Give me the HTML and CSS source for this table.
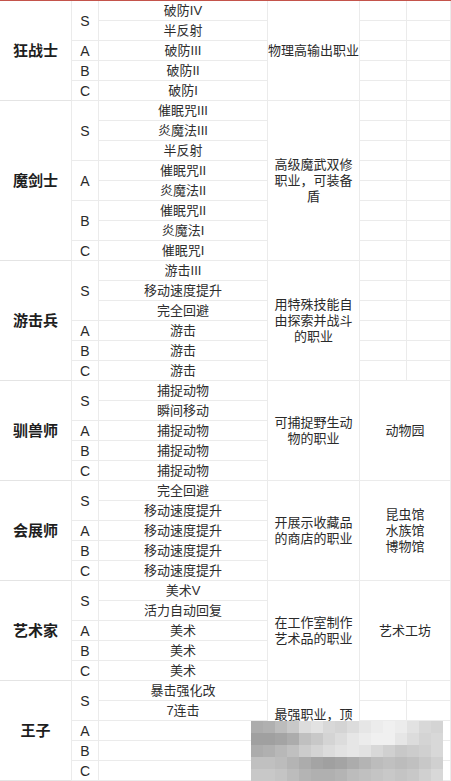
FILE: index.html
```html
<!DOCTYPE html>
<html lang="zh-CN">
<head>
<meta charset="utf-8">
<title>职业表</title>
<link rel="stylesheet" href="styles.css">
</head>
<body>
<div class="page">
  <div class="sheet">
    <!-- 狂战士 -->
    <div class="c job r5">狂战士</div>
    <div class="c rank r2">S</div>
    <div class="c skill">破防IV</div>
    <div class="c desc r5">物理高输出职业</div>
    <div class="c"></div><div class="c"></div>
    <div class="c skill">半反射</div>
    <div class="c"></div><div class="c"></div>
    <div class="c rank">A</div>
    <div class="c skill">破防III</div>
    <div class="c"></div><div class="c"></div>
    <div class="c rank">B</div>
    <div class="c skill">破防II</div>
    <div class="c"></div><div class="c"></div>
    <div class="c rank">C</div>
    <div class="c skill">破防I</div>
    <div class="c"></div><div class="c"></div>

    <!-- 魔剑士 -->
    <div class="c job r8">魔剑士</div>
    <div class="c rank r3">S</div>
    <div class="c skill">催眠咒III</div>
    <div class="c desc r8">高级魔武双修<br>职业，可装备<br>盾</div>
    <div class="c"></div><div class="c"></div>
    <div class="c skill">炎魔法III</div>
    <div class="c"></div><div class="c"></div>
    <div class="c skill">半反射</div>
    <div class="c"></div><div class="c"></div>
    <div class="c rank r2">A</div>
    <div class="c skill">催眠咒II</div>
    <div class="c"></div><div class="c"></div>
    <div class="c skill">炎魔法II</div>
    <div class="c"></div><div class="c"></div>
    <div class="c rank r2">B</div>
    <div class="c skill">催眠咒II</div>
    <div class="c"></div><div class="c"></div>
    <div class="c skill">炎魔法I</div>
    <div class="c"></div><div class="c"></div>
    <div class="c rank">C</div>
    <div class="c skill">催眠咒I</div>
    <div class="c"></div><div class="c"></div>

    <!-- 游击兵 -->
    <div class="c job r6">游击兵</div>
    <div class="c rank r3">S</div>
    <div class="c skill">游击III</div>
    <div class="c desc r6">用特殊技能自<br>由探索并战斗<br>的职业</div>
    <div class="c"></div><div class="c"></div>
    <div class="c skill">移动速度提升</div>
    <div class="c"></div><div class="c"></div>
    <div class="c skill">完全回避</div>
    <div class="c"></div><div class="c"></div>
    <div class="c rank">A</div>
    <div class="c skill">游击</div>
    <div class="c"></div><div class="c"></div>
    <div class="c rank">B</div>
    <div class="c skill">游击</div>
    <div class="c"></div><div class="c"></div>
    <div class="c rank">C</div>
    <div class="c skill">游击</div>
    <div class="c"></div><div class="c"></div>

    <!-- 驯兽师 -->
    <div class="c job r5">驯兽师</div>
    <div class="c rank r2">S</div>
    <div class="c skill">捕捉动物</div>
    <div class="c desc r5">可捕捉野生动<br>物的职业</div>
    <div class="c bld r5 w2">动物园</div>
    <div class="c skill">瞬间移动</div>
    <div class="c rank">A</div>
    <div class="c skill">捕捉动物</div>
    <div class="c rank">B</div>
    <div class="c skill">捕捉动物</div>
    <div class="c rank">C</div>
    <div class="c skill">捕捉动物</div>

    <!-- 会展师 -->
    <div class="c job r5">会展师</div>
    <div class="c rank r2">S</div>
    <div class="c skill">完全回避</div>
    <div class="c desc r5">开展示收藏品<br>的商店的职业</div>
    <div class="c bld r5 w2">昆虫馆<br>水族馆<br>博物馆</div>
    <div class="c skill">移动速度提升</div>
    <div class="c rank">A</div>
    <div class="c skill">移动速度提升</div>
    <div class="c rank">B</div>
    <div class="c skill">移动速度提升</div>
    <div class="c rank">C</div>
    <div class="c skill">移动速度提升</div>

    <!-- 艺术家 -->
    <div class="c job r5">艺术家</div>
    <div class="c rank r2">S</div>
    <div class="c skill">美术V</div>
    <div class="c desc r5">在工作室制作<br>艺术品的职业</div>
    <div class="c bld r5 w2">艺术工坊</div>
    <div class="c skill">活力自动回复</div>
    <div class="c rank">A</div>
    <div class="c skill">美术</div>
    <div class="c rank">B</div>
    <div class="c skill">美术</div>
    <div class="c rank">C</div>
    <div class="c skill">美术</div>

    <!-- 王子 -->
    <div class="c job r5">王子</div>
    <div class="c rank r2">S</div>
    <div class="c skill">暴击强化改</div>
    <div class="c desc r5 top">最强职业，顶</div>
    <div class="c"></div><div class="c"></div>
    <div class="c skill">7连击</div>
    <div class="c"></div><div class="c"></div>
    <div class="c rank">A</div>
    <div class="c skill"></div>
    <div class="c"></div><div class="c"></div>
    <div class="c rank">B</div>
    <div class="c skill"></div>
    <div class="c"></div><div class="c"></div>
    <div class="c rank">C</div>
    <div class="c skill"></div>
    <div class="c"></div><div class="c"></div>
  </div>
  <div class="mosaic" id="mosaic" aria-hidden="true"></div>
</div>
<script src="script.js"></script>
</body>
</html>
```

FILE: styles.css
```css
html, body {
  margin: 0;
  padding: 0;
  background: #ffffff;
}
body {
  width: 451px;
  height: 781px;
  overflow: hidden;
  font-family: "Liberation Sans", "Noto Sans CJK SC", sans-serif;
  color: #2a2a2a;
}
.page {
  position: relative;
  width: 451px;
  height: 781px;
  overflow: hidden;
}
.sheet {
  display: grid;
  grid-template-columns: 72px 27px 169px 92px 47px 44px;
  grid-auto-rows: 20px;
  border-top: 1px solid #c4544b;
}
.c {
  box-sizing: border-box;
  border-right: 1px solid #ebebeb;
  border-bottom: 1px solid #ebebeb;
  display: flex;
  align-items: center;
  justify-content: center;
  text-align: center;
  white-space: nowrap;
  font-size: 13px;
  line-height: 16px;
  min-width: 0;
  overflow: hidden;
}
.r2 { grid-row: span 2; }
.r3 { grid-row: span 3; }
.r5 { grid-row: span 5; }
.r6 { grid-row: span 6; }
.r8 { grid-row: span 8; }
.w2 { grid-column: span 2; }
.job {
  font-size: 15px;
  font-weight: bold;
  color: #1e1e1e;
  border-bottom-color: #e4e4e4;
}
.rank {
  font-size: 14px;
  color: #2a2a2a;
}
.skill {
  font-size: 13px;
  color: #2e2e2e;
  padding-top: 1px;
}
.desc {
  font-size: 13px;
  line-height: 16px;
  color: #2a2a2a;
}
.bld {
  font-size: 13px;
  line-height: 16px;
  color: #2a2a2a;
}
.desc.top {
  align-items: flex-start;
  padding-top: 26px;
}
.mosaic {
  position: absolute;
  left: 251px;
  top: 721px;
  width: 192px;
  height: 60px;
  display: grid;
  grid-template-columns: repeat(16, 12px);
  grid-template-rows: repeat(5, 12px);
  filter: blur(0.7px);
}
.mosaic .px {
  width: 12px;
  height: 12px;
}
```

FILE: script.js
```js
(function () {
  var rows = [
    [0xac,0xb0,0xbc,0xc8,0xdc,0xe2,0xd8,0xd4,0xdc,0xe6,0xec,0xf0,0xec,0xe2,0xd8,0xd4],
    [0xa0,0xa0,0xa4,0xac,0xc0,0xc8,0xd4,0xdc,0xe6,0xec,0xf0,0xf0,0xe6,0xdc,0xd4,0xd8],
    [0xac,0xb0,0xb8,0xc0,0xcc,0xd4,0xdc,0xe2,0xe6,0xe2,0xd8,0xd0,0xc8,0xcc,0xd0,0xd8],
    [0xc0,0xc0,0xbc,0xb4,0xac,0xa4,0xa0,0xa4,0xac,0xb4,0xbc,0xc0,0xbc,0xc0,0xc8,0xd0],
    [0xc8,0xc8,0xc4,0xbc,0xb4,0xb0,0xb0,0xb4,0xbc,0xc0,0xc4,0xc8,0xc4,0xc8,0xd0,0xd8]
  ];
  var host = document.getElementById('mosaic');
  rows.forEach(function (row) {
    row.forEach(function (v) {
      var d = document.createElement('div');
      d.className = 'px';
      d.style.backgroundColor = 'rgb(' + v + ',' + v + ',' + v + ')';
      host.appendChild(d);
    });
  });
})();
```
